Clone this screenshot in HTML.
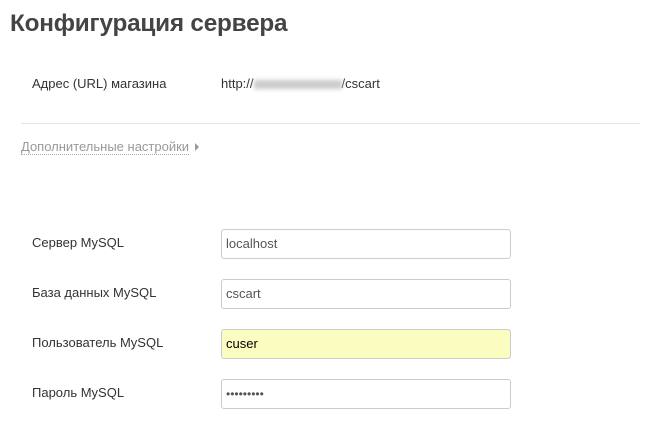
<!DOCTYPE html><html><head><meta charset="utf-8"><style>
body{margin:0;width:657px;height:427px;background:#fff;font-family:"Liberation Sans",sans-serif;color:#333;position:relative;overflow:hidden}
.a{position:absolute;white-space:nowrap}
h1{position:absolute;left:10px;top:10px;margin:0;font-size:24.3px;font-weight:bold;color:#444;letter-spacing:-0.2px}
.l{font-size:13px;color:#333}
.in{position:absolute;left:221px;height:28px;border:1px solid #ccc;border-radius:3px;background:#fff;font-size:13px;color:#555;line-height:28px;padding-left:4px;box-sizing:content-box;width:284px}
.blur{display:inline-block;width:88px;height:9px;background:#ccc;filter:blur(2px);vertical-align:middle}
</style></head><body>
<h1>Конфигурация сервера</h1>
<div class="a l" style="left:32px;top:76px">Адрес (URL) магазина</div>
<div class="a l" style="left:221px;top:76px">http://<span class="blur"></span>/cscart</div>
<div class="a" style="left:21px;top:123px;width:619px;height:1px;background:#e6e6e6"></div>
<div class="a" style="left:21px;top:139px;font-size:13px;color:#999;border-bottom:1px dotted #aaa;line-height:15px">Дополнительные настройки</div>
<div class="a" style="left:195px;top:143px;width:0;height:0;border-left:4px solid #999;border-top:4px solid transparent;border-bottom:4px solid transparent"></div>
<div class="a l" style="left:32px;top:235px">Сервер MySQL</div>
<div class="a l" style="left:32px;top:285px">База данных MySQL</div>
<div class="a l" style="left:32px;top:335px">Пользователь MySQL</div>
<div class="a l" style="left:32px;top:385px">Пароль MySQL</div>
<div class="in" style="top:229px">localhost</div>
<div class="in" style="top:279px">cscart</div>
<div class="in" style="top:329px;background:#fafcc0;color:#000">cuser</div>
<div class="in" style="top:379px;font-size:12px;color:#555">•••••••••</div>
</body></html>
